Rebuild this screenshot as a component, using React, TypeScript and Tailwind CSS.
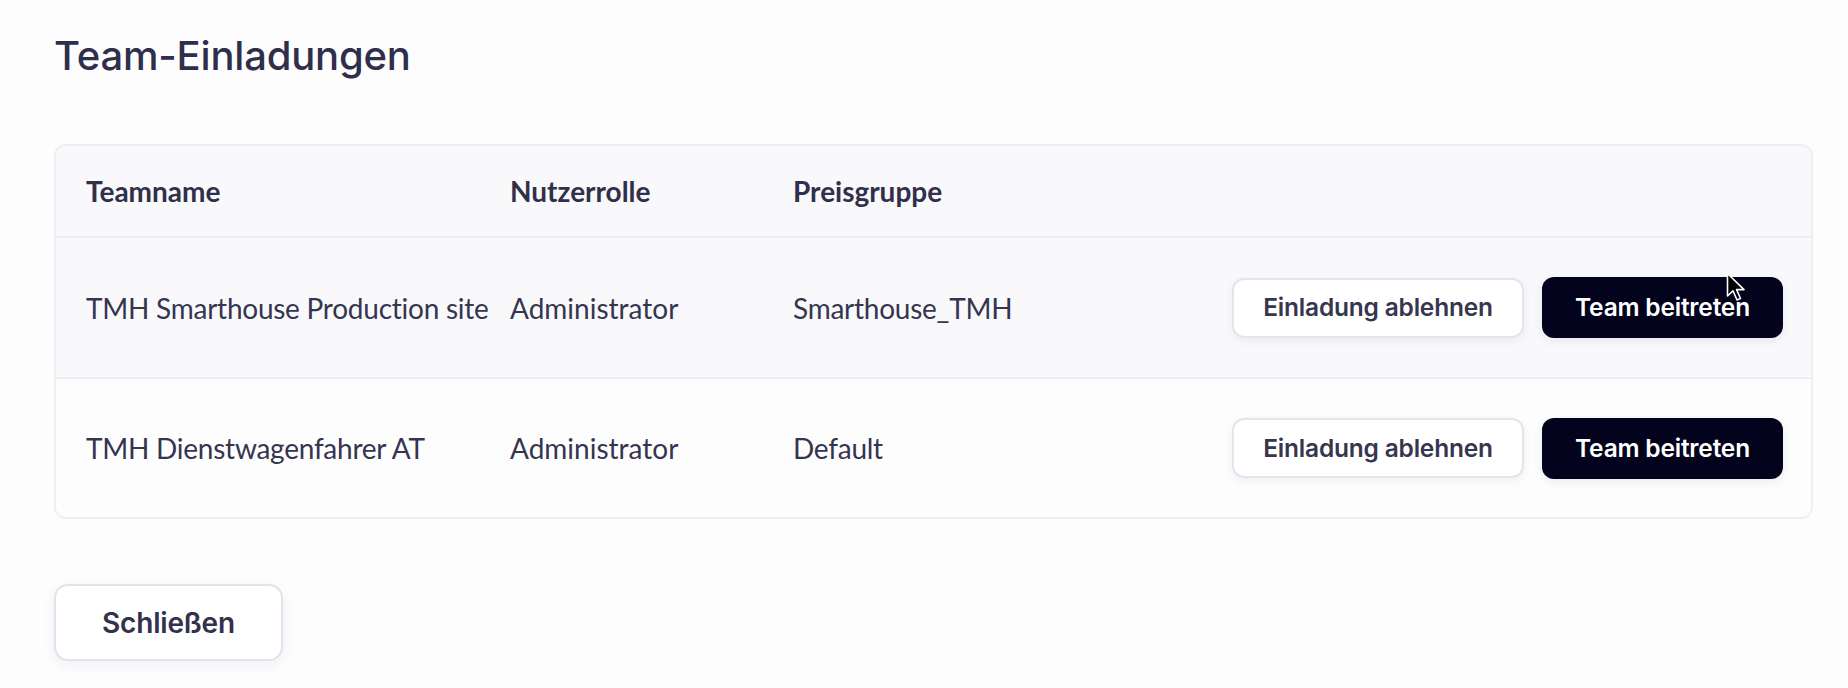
import React from "react";

const rows = [
  { name: "TMH Smarthouse Production site", role: "Administrator", group: "Smarthouse_TMH", bg: "bg-[#f9f9fc]", cursor: true },
  { name: "TMH Dienstwagenfahrer AT", role: "Administrator", group: "Default", bg: "bg-[#fdfdfe]", cursor: false },
];

function Cursor() {
  return (
    <svg className="absolute left-[184px] top-[-5px] pointer-events-none" width="22" height="32" viewBox="0 0 22 32">
      <path d="M1.5 1.5 L1.5 24 L7 18.8 L11 28 L14.5 26.5 L10.6 17.6 L18 17.6 Z" fill="#000" stroke="#fff" strokeWidth="1.6" strokeLinejoin="round" />
    </svg>
  );
}

export default function App() {
  return (
    <div className="min-h-[688px] w-full bg-[#fdfdfe] px-[54px] pt-[32px] pb-[27px] flex flex-col" style={{ fontFamily: "Lato, 'Noto Sans', sans-serif" }}>
      <h1 className="text-[40px] leading-[48px] font-medium text-[#2f2e4b] tracking-[-0.2px]" style={{ fontFamily: "Inter, 'Noto Sans', sans-serif" }}>
        Team-Einladungen
      </h1>

      <div className="mt-[64px] w-[1759px] rounded-[12px] border-2 border-[#eeeef4] overflow-hidden">
        <div className="grid grid-cols-[424px_283px_1fr] items-center h-[92px] bg-[#f9f9fc] border-b-2 border-[#eeeef4] pl-[30px] text-[28px] font-bold text-[#30304a]">
          <div>Teamname</div>
          <div>Nutzerrolle</div>
          <div>Preisgruppe</div>
        </div>
        {rows.map((r, i) => (
          <div
            key={i}
            className={`grid grid-cols-[424px_283px_1fr_auto] items-center ${i === 0 ? "h-[141px] border-b-2 border-[#eeeef4]" : "h-[138px]"} ${r.bg} pl-[30px] pr-[28px] text-[28px] text-[#35354f]`}
          >
            <div className="whitespace-nowrap tracking-[-0.25px]">{r.name}</div>
            <div>{r.role}</div>
            <div className="tracking-[-0.25px]">{r.group}</div>
            <div className="flex items-center gap-[18px]" style={{ fontFamily: "Inter, 'Noto Sans', sans-serif" }}>
              <button className="h-[60px] w-[292px] rounded-[12px] border-2 border-[#e4e4ec] bg-white text-[24.5px] font-semibold text-[#37364f] shadow-[0_3px_10px_rgba(30,30,60,0.06)] tracking-[-0.2px]">
                Einladung ablehnen
              </button>
              <div className="relative">
                <button className="h-[61px] w-[241px] rounded-[12px] bg-[#03031d] text-[24.5px] font-semibold text-white shadow-[0_3px_10px_rgba(30,30,60,0.08)] tracking-[-0.2px]">
                  Team beitreten
                </button>
                {r.cursor && <Cursor />}
              </div>
            </div>
          </div>
        ))}
      </div>

      <div className="mt-[65px]">
        <button
          className="h-[77px] w-[229px] rounded-[14px] border-2 border-[#e2e2ec] bg-white text-[28px] font-semibold text-[#33324d] shadow-[0_4px_14px_rgba(30,30,60,0.06)] tracking-[-0.2px]"
          style={{ fontFamily: "Inter, 'Noto Sans', sans-serif" }}
        >
          Schließen
        </button>
      </div>
    </div>
  );
}
